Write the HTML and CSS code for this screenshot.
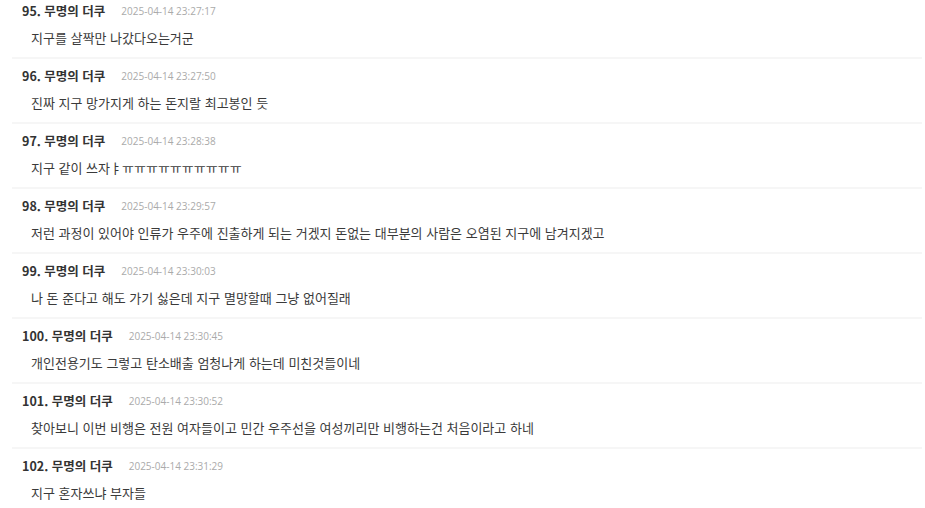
FILE: index.html
```html
<!DOCTYPE html>
<html lang="ko">
<head>
<meta charset="utf-8">
<link rel="stylesheet" href="styles.css">
</head>
<body>
<ul class="comments">
  <li class="comment">
    <div class="head"><span class="author">95. 무명의 더쿠</span><span class="date">2025-04-14 23:27:17</span></div>
    <div class="text">지구를 살짝만 나갔다오는거군</div>
  </li>
  <li class="comment">
    <div class="head"><span class="author">96. 무명의 더쿠</span><span class="date">2025-04-14 23:27:50</span></div>
    <div class="text">진짜 지구 망가지게 하는 돈지랄 최고봉인 듯</div>
  </li>
  <li class="comment">
    <div class="head"><span class="author">97. 무명의 더쿠</span><span class="date">2025-04-14 23:28:38</span></div>
    <div class="text">지구 같이 쓰자ㅑㅠㅠㅠㅠㅠㅠㅠㅠㅠㅠ</div>
  </li>
  <li class="comment">
    <div class="head"><span class="author">98. 무명의 더쿠</span><span class="date">2025-04-14 23:29:57</span></div>
    <div class="text">저런 과정이 있어야 인류가 우주에 진출하게 되는 거겠지 돈없는 대부분의 사람은 오염된 지구에 남겨지겠고</div>
  </li>
  <li class="comment">
    <div class="head"><span class="author">99. 무명의 더쿠</span><span class="date">2025-04-14 23:30:03</span></div>
    <div class="text">나 돈 준다고 해도 가기 싫은데 지구 멸망할때 그냥 없어질래</div>
  </li>
  <li class="comment">
    <div class="head"><span class="author">100. 무명의 더쿠</span><span class="date">2025-04-14 23:30:45</span></div>
    <div class="text">개인전용기도 그렇고 탄소배출 엄청나게 하는데 미친것들이네</div>
  </li>
  <li class="comment">
    <div class="head"><span class="author">101. 무명의 더쿠</span><span class="date">2025-04-14 23:30:52</span></div>
    <div class="text">찾아보니 이번 비행은 전원 여자들이고 민간 우주선을 여성끼리만 비행하는건 처음이라고 하네</div>
  </li>
  <li class="comment">
    <div class="head"><span class="author">102. 무명의 더쿠</span><span class="date">2025-04-14 23:31:29</span></div>
    <div class="text">지구 혼자쓰냐 부자들</div>
  </li>
</ul>
</body>
</html>
```
FILE: styles.css
```css
html, body {
  margin: 0;
  padding: 0;
  background: #fff;
}
body {
  font-family: "Noto Sans CJK KR", "Noto Sans", sans-serif;
  color: #333;
  overflow: hidden;
}
.comments {
  list-style: none;
  margin: -6px 3px 0 12px;
  padding: 0;
}
.comment {
  padding: 7px 10px 9px 10px;
  border-bottom: 2px solid #f6f6f6;
}
.head {
  display: flex;
  align-items: center;
  gap: 16px;
  height: 20px;
  line-height: 20px;
}
.author {
  font-size: 12.5px;
  font-weight: 700;
  color: #333;
}
.date {
  font-size: 10px;
  color: #aaa;
  font-family: "Open Sans", "Noto Sans CJK KR", sans-serif;
}
.text {
  margin-top: 7px;
  padding-left: 9px;
  height: 20px;
  line-height: 20px;
  font-size: 13px;
  color: #3a3a3a;
}
```
